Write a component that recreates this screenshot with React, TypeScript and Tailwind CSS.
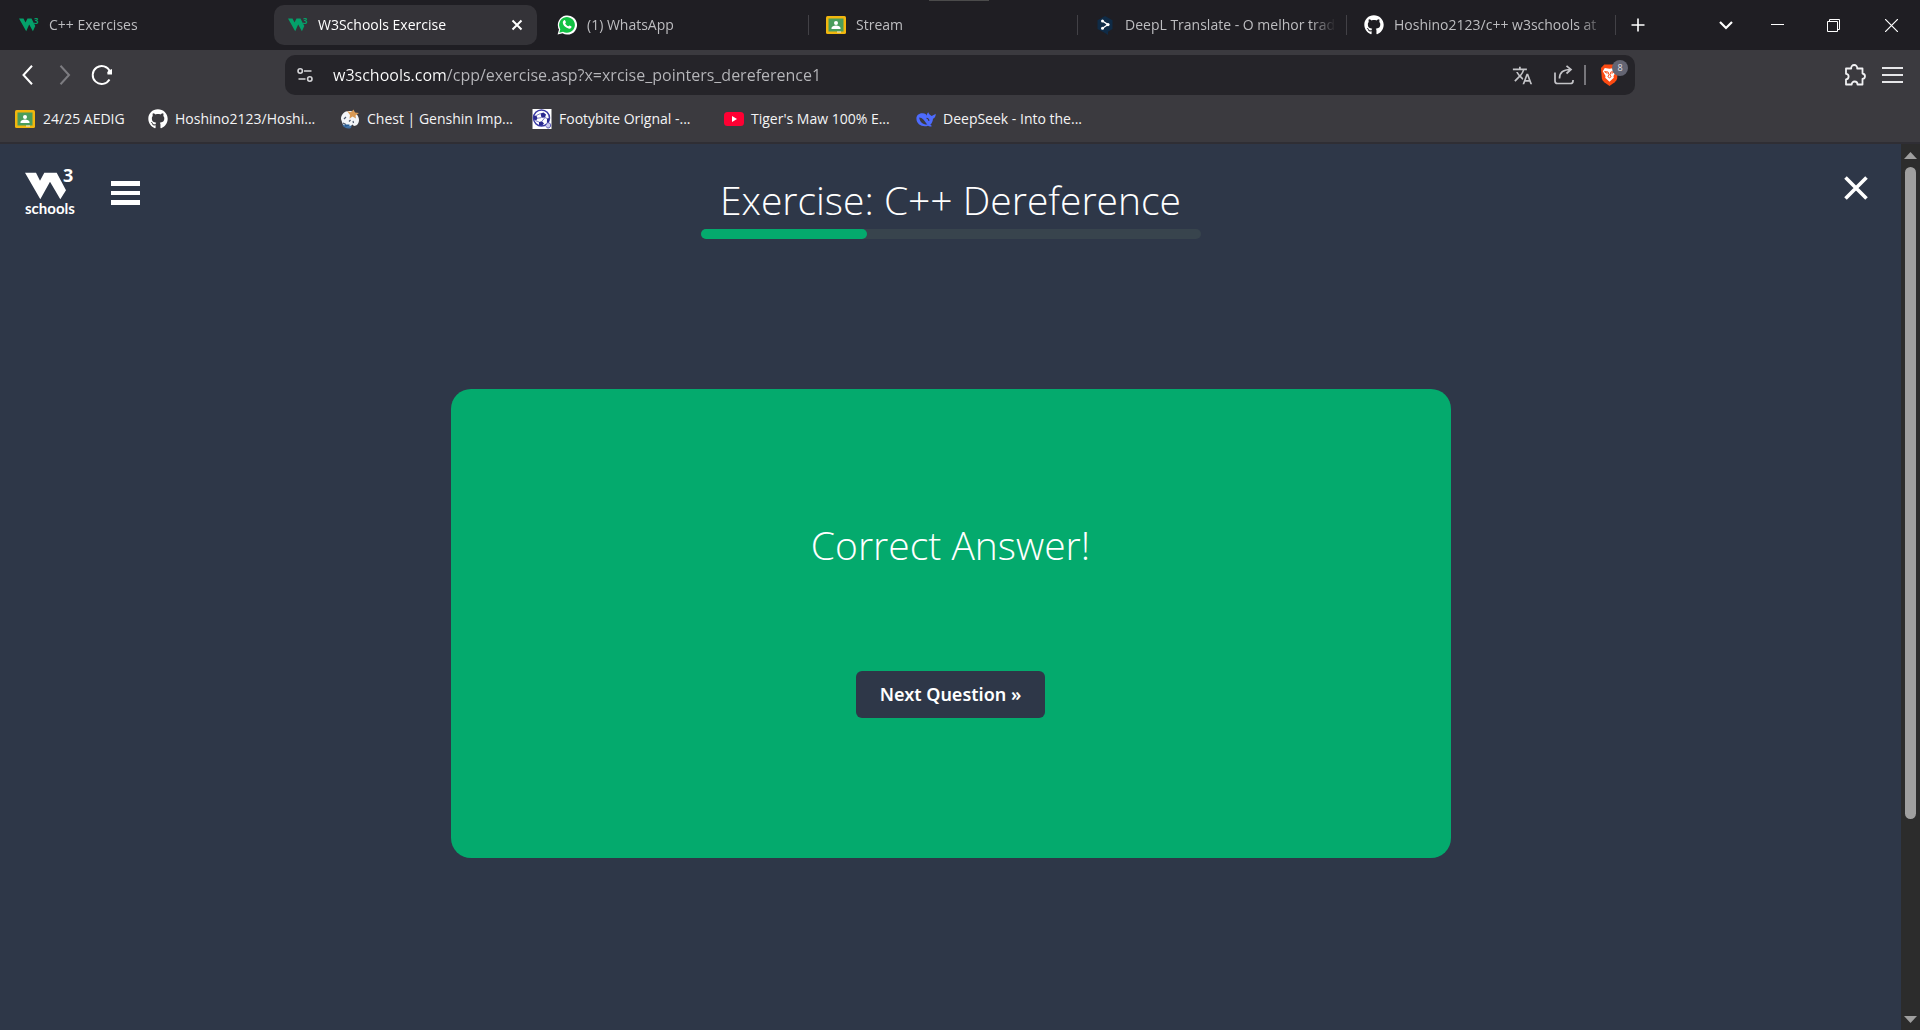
import React from 'react';
import { FaGithub } from 'react-icons/fa';
import { MdTranslate } from 'react-icons/md';

function W3Icon() {
  return (
    <svg viewBox="0 0 20 20" className="h-5 w-5" aria-hidden="true">
      <path d="M0 3.500h4.500l2 4 2-4h4l3.800 7.400-2.400 5.300-3.700-6.600-3 6.600z" fill="#04a06a" />
      <text x="15" y="9" fontSize="8" fontWeight="700" fontFamily="Open Sans, sans-serif" fill="#04a06a">3</text>
    </svg>
  );
}

function WhatsAppIcon() {
  return (
    <svg viewBox="0 0 20 20" className="h-5 w-5" aria-hidden="true">
      <path d="M0.600 19.600l1.400-5A9.600 9.600 0 1 1 5.600 18.300z" fill="#fff" />
      <path d="M2.300 17.800l1-3.600A7.900 7.900 0 1 1 6 16.800z" fill="#12c143" />
      <path d="M7 5.300c.6-.4 1-.2 1.300.4l.6 1.400c.2.500-.7 1.100-.7 1.500.5 1.200 1.600 2.200 2.900 2.700.4.100 1-1 1.500-.8l1.600.8c.6.300.3 1.500-.4 2-2 1.400-7.800-1.600-8-5.700 0-1 .6-1.900 1.200-2.300z" fill="#fff" />
    </svg>
  );
}

function ClassroomIcon() {
  return (
    <svg viewBox="0 0 20 20" className="h-5 w-5" aria-hidden="true">
      <rect x="0" y="1" width="20" height="18" rx="1.500" fill="#f1b60e" />
      <rect x="2.500" y="3.500" width="15" height="13" fill="#4a9d5b" />
      <circle cx="10" cy="8" r="2" fill="#fff" />
      <path d="M5.500 14v-1c0-1.500 2.300-2.400 4.500-2.400s4.500.9 4.500 2.400v1z" fill="#fff" />
      <path d="M11 16.500h4v1h-4z" fill="#e8e8e8" />
    </svg>
  );
}

function DeepLIcon() {
  return (
    <svg viewBox="0 0 20 20" className="h-5 w-5" aria-hidden="true">
      <path d="M10 1l7.500 4.300v8.700l-4.500 2.700V20l-3-2-7.500-4V5.300z" fill="#0f2b46" />
      <path d="M7.500 6l5.500 3.600-5.500 3.700" stroke="#fff" strokeWidth="1.300" fill="none" />
      <circle cx="7.500" cy="6" r="1.500" fill="#fff" />
      <circle cx="13" cy="9.600" r="1.600" fill="#fff" />
      <circle cx="7.500" cy="13.300" r="1.500" fill="#fff" />
    </svg>
  );
}

function ChestIcon() {
  return (
    <svg viewBox="0 0 20 20" className="h-5 w-5" aria-hidden="true">
      <path d="M2 15.500c2 3.500 6 5 9 3.500l1-4z" fill="#3f6fa3" />
      <path d="M1 10c0-5 4-8.500 9-8 5 .3 9 4.500 9 9 0 3-2 6-5 6l-1.500-1.500C10 18.500 4 17.500 2.500 14.500z" fill="#f3f5f8" />
      <path d="M7 2l4 1.300L13.500.5l1.500 3 4 .5-3.500 2.500.5 3-3.500-2-3 2.300.5-3.800z" fill="#d99a55" />
      <path d="M4 10l2-2M9 12.500l1.500-1.500M3 14l3 1.500M13 12l.5 2" stroke="#4a5568" strokeWidth="1.200" />
      <path d="M4.500 16.500h5" stroke="#255a92" strokeWidth="2" />
    </svg>
  );
}

function FootballIcon() {
  return (
    <svg viewBox="0 0 20 20" className="h-5 w-5" aria-hidden="true">
      <rect x="0.500" width="19" height="20" fill="#fff" />
      <circle cx="9.500" cy="9" r="8" fill="#fff" stroke="#3a3aa5" strokeWidth="1.500" />
      <path d="M8.500 4.500l3-1 2.500 2-1 3-3.500.3zM1.800 7l2.500-.5 1.300 2.700-1.600 2.600-2-1.300zM7 13l3-.8 2 2.300-2 2.300-3-.8zM15 9.500l2.400-.5-.5 4-2 1z" fill="#29298f" />
      <path d="M4.300 6.500l4.200-2M5.600 9.200l3.500-.5M4 11.800L7 13m3-.8l3-3.700 2 1" stroke="#5c5cb8" strokeWidth=".8" fill="none" />
      <path d="M15 14c2-1 4 .5 3.500 3S15 19.500 14 17.500" fill="#c9c9ee" stroke="#4a4ab0" />
    </svg>
  );
}

function YouTubeIcon() {
  return (
    <svg viewBox="0 0 20 20" className="h-5 w-5" aria-hidden="true">
      <rect y="3" width="20" height="14" rx="3.500" fill="#ff0033" />
      <path d="M8 7v6l5-3z" fill="#fff" />
    </svg>
  );
}

function DeepSeekIcon() {
  return (
    <svg viewBox="0 0 20 20" className="h-5 w-5" aria-hidden="true">
      <path
        d="M12.300 3.300c.5 2 1.800 3 3.400 3.700 1.300-.3 2.400-1.200 4-2.200.1 2.400-.7 4.200-2.700 5-.2 2.900-1.300 4.700-2.700 6l1.700 1.100c-1.500.9-2.800.6-4-.2C6.600 18.500.4 15.500.4 9.500.4 6.400 3 3.900 7 4.300c1.900.2 3.300 1.200 4 2.500-.2-1.600.2-2.700 1.300-3.500z"
        fill="#4d6bfe"
      />
      <path d="M3.200 8.500c3.300.4 5 2.500 6.300 4.800.5 1 1.200 1.700 2 2.200-3.600.6-7.800-2.200-8.300-7z" fill="#3b3a3f" />
      <path d="M10.500 9.300c1.500.1 2.500 1.200 2.300 2.700" stroke="#3b3a3f" strokeWidth="1.100" fill="none" />
    </svg>
  );
}

const tabs = [
  { title: 'C++ Exercises', icon: <W3Icon /> },
  { title: 'W3Schools Exercise', icon: <W3Icon />, active: true },
  { title: '(1) WhatsApp', icon: <WhatsAppIcon />, line: true },
  { title: 'Stream', icon: <ClassroomIcon />, line: true },
  { title: 'DeepL Translate - O melhor trad', icon: <DeepLIcon />, line: true },
  { title: 'Hoshino2123/c++ w3schools at', icon: <FaGithub className="h-5 w-5 text-white" />, line: true },
];

const bookmarks = [
  { title: 'Hoshino2123/Hoshi...', icon: <FaGithub className="h-5 w-5 text-white" /> },
  { title: 'Chest | Genshin Imp...', icon: <ChestIcon /> },
  { title: 'Footybite Orignal -...', icon: <FootballIcon /> },
  { title: "Tiger's Maw 100% E...", icon: <YouTubeIcon /> },
  { title: 'DeepSeek - Into the...', icon: <DeepSeekIcon /> },
];

function TabStrip() {
  return (
    <div className="relative flex h-[50px] items-center bg-[#1f1e23] pl-[5px]">
      <div className="absolute top-0 left-[929px] h-px w-15 bg-[#4b4b4b]" />
      <div role="tablist" className="flex min-w-0 flex-1">
        {tabs.map((t) => (
          <div key={t.title} className="flex w-[269px] min-w-0 items-center">
            <div
              className={
                t.active
                  ? 'flex h-10 min-w-0 flex-1 items-center rounded-[10px] bg-[#343338] pr-3 pl-[14px] text-white'
                  : 'flex h-10 min-w-0 flex-1 items-center pr-2 pl-[14px] text-[#bdbdc0]'
              }
            >
              <button role="tab" aria-selected={!!t.active} className="flex min-w-0 flex-1 items-center gap-[10px] text-left">
                <span className="shrink-0">{t.icon}</span>
                <span className="min-w-0 flex-1 overflow-hidden whitespace-nowrap mask-r-from-88% mask-r-to-100%">{t.title}</span>
              </button>
              {t.active && (
                <button aria-label="Close tab" className="flex h-4 w-4 items-center justify-center">
                  <svg viewBox="0 0 16 16" className="h-4 w-4"><path d="M3.500 3.500l9 9m0-9l-9 9" stroke="#fff" strokeWidth="2" /></svg>
                </button>
              )}
            </div>
            <div className={t.line ? 'mr-[3px] ml-[2px] h-5 w-px bg-[#424146]' : 'mr-[3px] ml-[2px] h-5 w-px'} />
          </div>
        ))}
        <button aria-label="New tab" className="flex w-[38px] shrink-0 items-center justify-center">
          <svg viewBox="0 0 14 14" className="h-[14px] w-[14px]"><path d="M7 .5v13M.5 7h13" stroke="#fff" strokeWidth="1.600" /></svg>
        </button>
      </div>
      <button aria-label="Search tabs" className="flex h-10 w-12 items-center justify-center">
        <svg viewBox="0 0 14 14" className="h-[14px] w-[14px]"><path d="M1 4l6 6 6-6" stroke="#fff" strokeWidth="2.200" fill="none" /></svg>
      </button>
      <button aria-label="Minimize" className="flex h-10 w-[54px] items-center justify-center">
        <svg viewBox="0 0 13 13" className="h-[13px] w-[13px]"><path d="M0 5.500h13" stroke="#fff" /></svg>
      </button>
      <button aria-label="Restore" className="flex h-10 w-[58px] items-center justify-center">
        <svg viewBox="0 0 13 13" className="h-[13px] w-[13px]"><path d="M.5 2.500h10v10H.5zM2.500 2.500v-2h10v10h-2" stroke="#fff" fill="none" /></svg>
      </button>
      <button aria-label="Close" className="flex h-10 w-[58px] items-center justify-center">
        <svg viewBox="0 0 13 13" className="h-[13px] w-[13px]"><path d="M0 0l13 13M13 0L0 13" stroke="#fff" strokeWidth="1.200" /></svg>
      </button>
    </div>
  );
}

function Toolbar() {
  return (
    <div className="flex h-[50px] items-center px-[17px]">
      <div className="flex w-[268px] shrink-0 items-center gap-[17px]">
        <button aria-label="Back">
          <svg viewBox="0 0 20 20" className="h-5 w-5"><path d="M15 .8L6.500 10l8.500 9.200" stroke="#fff" strokeWidth="2" fill="none" /></svg>
        </button>
        <button aria-label="Forward">
          <svg viewBox="0 0 20 20" className="h-5 w-5"><path d="M6.500 .8L15 10l-8.500 9.200" stroke="#7d7c81" strokeWidth="2" fill="none" /></svg>
        </button>
        <button aria-label="Reload">
          <svg viewBox="0 0 22 22" className="h-[22px] w-[22px]">
            <path d="M18.500 15.500A9 9 0 1 1 19 7.500" stroke="#fff" strokeWidth="1.900" fill="none" />
            <path d="M21 5v5.500h-4.500a3.500 3.500 0 0 1 1-4z" fill="#fff" />
          </svg>
        </button>
      </div>
      <div className="flex h-10 w-[1350px] min-w-0 items-center rounded-[10px] bg-[#252429] pr-2 pl-3">
        <button aria-label="Site information">
          <svg viewBox="0 0 16 16" className="h-4 w-4" fill="none" stroke="#d5d5d8" strokeWidth="1.600">
            <circle cx="3.200" cy="4" r="2.200" /><path d="M7 4h7.500M1.500 12H8.500" /><circle cx="12.800" cy="12" r="2.200" />
          </svg>
        </button>
        <input
          aria-label="Address"
          defaultValue="w3schools.com/cpp/exercise.asp?x=xrcise_pointers_dereference1"
          className="ml-5 min-w-0 flex-1 bg-[linear-gradient(to_right,#ffffff_114px,#b7b7bb_114px)] bg-clip-text text-base text-transparent outline-none"
        />
        <button aria-label="Translate"><MdTranslate className="h-[21px] w-[21px] text-[#c4c4c8]" /></button>
        <button aria-label="Share" className="ml-[21px]">
          <svg viewBox="0 0 20 20" className="h-5 w-5" fill="none" stroke="#c4c4c8" strokeWidth="1.700">
            <path d="M1 7.500V16q0 2.500 2.500 2.500h13q2.500 0 2.500-2.500v-1M5.500 13.500C5.500 8 8.500 4.500 16.500 4.500M12.500 .8l4.500 3.700-4.500 4" />
          </svg>
        </button>
        <div className="mx-[10px] h-5 w-[2px] bg-[#77767b]" />
        <button aria-label="Brave Shields" className="relative mr-2 ml-1 flex h-6 w-[19px] items-center justify-center">
          <svg viewBox="0 0 20 24" className="h-6 w-5" aria-hidden="true">
            <path d="M4.500 1h11L19 4.500 18 16q-.5 2-2.500 3.500L10 23.500 4.500 19.500Q2.500 18 2 16L1 4.500z" fill="#fb4a12" />
            <path d="M5 4.500l5 .8 5-.8 2 3.500-2.800 5 .3 2L10 19l-4.500-4 .3-2L3 8z" fill="#fff" />
            <path d="M4.800 8.500l3.700.3 1 3-1.200 2L10 15l1.700-1.200-1.200-2 1-3 3.700-.3-3 2M4.800 8.500l3 2" stroke="#fb4a12" strokeWidth="1" fill="none" />
          </svg>
          <span className="absolute -top-[3px] left-3 flex h-4 w-4 items-center justify-center rounded-full bg-[#636472] text-[9px] text-[#dedee2]">8</span>
        </button>
      </div>
      <div className="flex flex-1 items-center justify-end gap-4">
        <button aria-label="Extensions">
          <svg viewBox="0 0 22 22" className="h-[22px] w-[22px]" fill="none" stroke="#f0f0f2" strokeWidth="1.800" strokeLinejoin="round">
            <path d="M2 4.500h5.200C7 2.500 8.300 1 10.200 1s3.200 1.500 3 3.500h5.300v5c1.400.3 2.500 1.200 2.500 2.700s-1.100 2.500-2.500 2.800v5.500h-5c0-1.800-1.200-3-2.900-3s-2.900 1.200-2.900 3H2v-5.200c1.500 0 2.600-1.200 2.600-2.700S3.500 9.800 2 9.800z" />
          </svg>
        </button>
        <button aria-label="Menu">
          <svg viewBox="0 0 21 18" className="h-[18px] w-[21px]"><path d="M0 2h21M0 9h21M0 16h21" stroke="#e6e6e8" strokeWidth="2" /></svg>
        </button>
      </div>
    </div>
  );
}

function Bookmarks() {
  return (
    <nav aria-label="Bookmarks" className="flex h-[42px] items-center gap-4 pb-1 pl-[15px] text-[#f4f4f5]">
      <a href="#" className="flex w-[117px] shrink-0 items-center gap-2 whitespace-nowrap"><ClassroomIcon />24/25 AEDIG</a>
      {bookmarks.map((b) => (
        <a key={b.title} href="#" className="flex w-[176px] shrink-0 items-center gap-[7px] whitespace-nowrap">
          <span className="shrink-0">{b.icon}</span>
          {b.title}
        </a>
      ))}
    </nav>
  );
}

function ScrollBar() {
  return (
    <div className="flex w-[19px] shrink-0 flex-col items-center bg-[#2c2c2c] pt-2 pb-[7px]">
      <svg viewBox="0 0 13 7" className="h-[7px] w-[13px]" aria-hidden="true"><path d="M0 7l6.500-7L13 7z" fill="#9f9f9f" /></svg>
      <div className="mt-2 w-[11px] grow-[651] rounded-full bg-[#9f9f9f]" />
      <div className="grow-[197]" />
      <svg viewBox="0 0 13 7" className="h-[7px] w-[13px]" aria-hidden="true"><path d="M0 0l6.500 7L13 0z" fill="#9f9f9f" /></svg>
    </div>
  );
}

function ExercisePage() {
  return (
    <main className="grid min-w-0 flex-1 grid-cols-[1fr_auto_1fr] content-start bg-[#2e3748] text-white">
      <div className="flex items-start gap-[35px] pt-6 pl-6">
        <a href="#" aria-label="W3Schools home">
          <svg viewBox="0 0 52 52" className="h-[52px] w-[52px]" fill="#fff">
            <path d="M1 4.700h11l4 8 4.300-8h12.400L42 22.300 36.300 31.300 26 13.700l-9.700 17.600z" />
            <text x="39" y="14" fontSize="18" fontWeight="700" fontFamily="Open Sans, sans-serif">3</text>
            <text x="1" y="46" fontSize="15" fontWeight="700" fontFamily="Lato, sans-serif">schools</text>
          </svg>
        </a>
        <button aria-label="Menu" className="mt-[13px] flex w-[29px] flex-col gap-[5px]">
          <span className="h-[5px] bg-white" /><span className="h-[4px] bg-white" /><span className="h-[5px] bg-white" />
        </button>
      </div>
      <header className="flex w-[500px] flex-col pt-[30px]">
        <h1 className="mb-[3px] text-center text-[39px]/[52px] font-[350]">Exercise: C++ Dereference</h1>
        <div role="progressbar" aria-valuenow={33} aria-label="Exercise progress" className="h-[10px] rounded-full bg-[#38444d]">
          <div className="h-[10px] w-1/3 rounded-full bg-[#04aa6d]" />
        </div>
      </header>
      <div className="flex justify-end pt-8 pr-[33px]">
        <button aria-label="Close exercise" className="h-6 w-6">
          <svg viewBox="0 0 24 24" className="h-6 w-6"><path d="M1.500 1.500l21 21m0-21l-21 21" stroke="#fff" strokeWidth="3.600" /></svg>
        </button>
      </div>
      <section className="col-span-3 mt-[150px] flex w-[1000px] max-w-full flex-col items-center justify-self-center rounded-[20px] bg-[#04aa6d] pt-[130px] pb-[140px]">
        <h2 className="text-[39px]/[52px] font-[350]">Correct Answer!</h2>
        <button className="mt-[100px] rounded-md bg-[#2e3748] px-6 py-[10px] font-['Noto_Sans'] text-[18px]/[27px] font-semibold">Next Question »</button>
      </section>
    </main>
  );
}

export default function App() {
  return (
    <div className="flex min-h-screen flex-col font-['Open_Sans',sans-serif] text-sm">
      <div className="border-b-2 border-[#2f2e34] bg-[#3b3a3f]">
        <TabStrip />
        <Toolbar />
        <Bookmarks />
      </div>
      <div className="flex flex-1">
        <ExercisePage />
        <ScrollBar />
      </div>
    </div>
  );
}
